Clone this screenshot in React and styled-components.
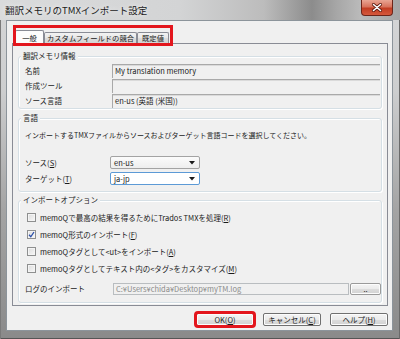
import styled, { createGlobalStyle } from 'styled-components';

const GlobalStyle = createGlobalStyle`
  html, body {
    margin: 0;
    padding: 0;
    background: #8c8c8c;
  }
  body {
    font-family: "Noto Sans CJK JP", "Noto Sans", sans-serif;
    color: #1a1a1a;
  }
`;

function App() {
  return (
    <>
      <GlobalStyle />
      <Window>
        <TitleBar>
          <Title>翻訳メモリのTMXインポート設定</Title>
          <CloseButton>
            <svg width='12' height='9' viewBox='0 0 12 9'>
              <path d='M2.5 1.5 L9.5 7.5 M9.5 1.5 L2.5 7.5' stroke='#5a1a10' strokeWidth='3' strokeLinecap='round' />
              <path d='M2.5 1.5 L9.5 7.5 M9.5 1.5 L2.5 7.5' stroke='#fff' strokeWidth='1.6' strokeLinecap='round' />
            </svg>
          </CloseButton>
        </TitleBar>
        <Body>
          <TabWrap>
            <Tab $active $w={29}>一般</Tab>
            <Tab $w={93}>カスタムフィールドの競合</Tab>
            <Tab $w={32}>既定値</Tab>
          </TabWrap>
          <Panel>
            <Group $pb={0}>
              <Legend>翻訳メモリ情報</Legend>
              <InfoGrid>
                <Label>名前</Label>
                <Field>My translation memory</Field>
                <Label>作成ツール</Label>
                <Field />
                <Label>ソース言語</Label>
                <Field>en-us (英語 (米国))</Field>
              </InfoGrid>
            </Group>

            <Group $gap={9} $pb={6}>
              <Legend>言語</Legend>
              <Sentence>インポートするTMXファイルからソースおよびターゲット言語コードを選択してください。</Sentence>
              <SelectGrid>
                <Label>ソース(<Key>S</Key>)</Label>
                <Select>
                  <span>en-us</span>
                  <Arrow />
                </Select>
                <Label>ターゲット(<Key>T</Key>)</Label>
                <Select $focused>
                  <span>ja-jp</span>
                  <Arrow />
                </Select>
              </SelectGrid>
            </Group>

            <Group $gap={8} $pb={7}>
              <Legend>インポートオプション</Legend>
              <OptionList>
                <CheckRow>
                  <CheckBox />
                  <span>memoQで最高の結果を得るためにTrados TMXを処理(<Key>R</Key>)</span>
                </CheckRow>
                <CheckRow>
                  <CheckBox checked />
                  <span>memoQ形式のインポート(<Key>F</Key>)</span>
                </CheckRow>
                <CheckRow>
                  <CheckBox />
                  <span>memoQタグとして&lt;ut&gt;をインポート(<Key>A</Key>)</span>
                </CheckRow>
                <CheckRow>
                  <CheckBox />
                  <span>memoQタグとしてテキスト内の&lt;タグ&gt;をカスタマイズ(<Key>M</Key>)</span>
                </CheckRow>
              </OptionList>
              <LogRow>
                <Label>ログのインポート</Label>
                <PathField>C:¥Users¥chida¥Desktop¥myTM.log</PathField>
                <Button $small>..</Button>
              </LogRow>
            </Group>
          </Panel>

          <ButtonRow>
            <Button $marked>OK(<Key>O</Key>)</Button>
            <Button>キャンセル(<Key>C</Key>)</Button>
            <Button>ヘルプ(<Key>H</Key>)</Button>
          </ButtonRow>
        </Body>
      </Window>
    </>
  );
}

function Arrow() {
  return (
    <svg width='6' height='4' viewBox='0 0 6 4'>
      <path d='M0 0 H6 L3 3.5 Z' fill='#1a1a1a' />
    </svg>
  );
}

function CheckBox({ checked }) {
  return (
    <Box>
      {checked && (
        <svg width='7' height='7' viewBox='0 0 7 7'>
          <path d='M1 3.8 L2.8 5.8 L6 1' stroke='#2b4fa8' strokeWidth='1.3' fill='none' />
        </svg>
      )}
    </Box>
  );
}

export default App;

const Window = styled.div`
  box-sizing: border-box;
  width: 400px;
  height: 339px;
  display: flex;
  flex-direction: column;
  padding: 0 7px 8px 6px;
  background: linear-gradient(180deg, #d5d6d7 0, #cdcecf 90px, #a4a4a4 210px, #8a8a8a 100%);
  box-shadow: inset 1px 0 #7a7a7a, inset -1px 0 #6a6a6a, inset 0 -1px #555;
`;

const TitleBar = styled.div`
  height: 20px;
  margin: 0 -7px 0 -6px;
  padding: 0 7px 0 5px;
  display: flex;
  align-items: flex-start;
  justify-content: space-between;
  background: linear-gradient(90deg, #dadbdc 0%, #d3d4d5 45%, #bcbcbc 66%, #8c8c8c 78%, #a6a6a6 84%, #bababa 90%, #a5a5a5 100%);
`;

const Title = styled.div`
  font-size: 9.5px;
  line-height: 21px;
  color: #1b1b1b;
  text-shadow: 0 0 5px rgba(255, 255, 255, 0.9);
`;

const CloseButton = styled.div`
  box-sizing: border-box;
  width: 32px;
  height: 16px;
  display: flex;
  align-items: center;
  justify-content: center;
  border: 1px solid #6d2519;
  border-top: none;
  border-radius: 0 0 4px 4px;
  background: linear-gradient(180deg, #e9a593 0%, #d8735c 45%, #c23d22 55%, #d5583c 100%);
`;

const Body = styled.div`
  flex: 1;
  display: flex;
  flex-direction: column;
  background: #f0f0f0;
  border: 1px solid #8c949b;
  padding: 7px 4px 4px 5px;
`;

const TabWrap = styled.div`
  position: relative;
  z-index: 2;
  align-self: flex-start;
  display: flex;
  align-items: flex-end;
  width: 154px;
  height: 15px;
  margin-left: 4px;
  outline: 3px solid #e3161d;
`;

const Tab = styled.div`
  box-sizing: border-box;
  width: ${(p) => p.$w}px;
  height: ${(p) => (p.$active ? 14 : 11)}px;
  margin-left: ${(p) => (p.$active ? -1 : 0)}px;
  margin-bottom: ${(p) => (p.$active ? -1 : 0)}px;
  display: flex;
  align-items: center;
  justify-content: center;
  white-space: nowrap;
  border: 1px solid #898c95;
  border-bottom: none;
  border-radius: 2px 2px 0 0;
  background: ${(p) => (p.$active ? '#fcfcfc' : 'linear-gradient(180deg, #f3f3f3, #e7e7e7 50%, #dcdcdc 50%, #d4d4d4)')};
  font-size: 7.3px;
  line-height: 10px;
`;

const Panel = styled.div`
  flex: 1;
  display: flex;
  flex-direction: column;
  border: 1px solid #898c95;
  padding: 12px 5px 2px 5px;
  background: #f0f0f0;
`;

const Group = styled.div`
  margin-top: ${(p) => p.$gap || 0}px;
  border: 1px solid #d5dfe5;
  border-radius: 3px;
  box-shadow: inset 1px 1px #fff, 1px 1px #fff;
  padding: 0 1px ${(p) => p.$pb}px 6px;
`;

const Legend = styled.div`
  display: table;
  margin: -6px 0 0 -4px;
  padding: 0 2px;
  background: #f0f0f0;
  font-size: 7.5px;
  line-height: 10px;
`;

const Label = styled.div`
  font-size: 7.5px;
  line-height: 10px;
  white-space: nowrap;
`;

const Key = styled.span`
  text-decoration: underline;
`;

const InfoGrid = styled.div`
  margin-top: 3px;
  display: grid;
  grid-template-columns: 87px 1fr;
  grid-auto-rows: 14px;
  row-gap: 1px;
  align-items: center;
`;

const Field = styled.div`
  box-sizing: border-box;
  height: 14px;
  border-top: 1px solid #a9a9a9;
  border-left: 1px solid #a9a9a9;
  box-shadow: inset 0 1px #dadada;
  padding-left: 2px;
  font-size: 7.5px;
  line-height: 12px;
  white-space: nowrap;
`;

const Sentence = styled.div`
  margin-top: 7px;
  font-size: 7px;
  line-height: 10px;
  white-space: nowrap;
`;

const SelectGrid = styled.div`
  margin-top: 16px;
  display: grid;
  grid-template-columns: 85px 90px;
  grid-auto-rows: 13px;
  row-gap: 3px;
  align-items: center;
`;

const Select = styled.div`
  box-sizing: border-box;
  height: 13px;
  display: flex;
  align-items: center;
  justify-content: space-between;
  padding: 0 4px 0 3px;
  border: 1px solid ${(p) => (p.$focused ? '#5c9ad6' : '#a3a3a3')};
  border-radius: 2px;
  background: ${(p) => (p.$focused ? '#fff' : 'linear-gradient(180deg, #fbfbfb, #eeeeee)')};
  font-size: 7.5px;
  line-height: 11px;
`;

const OptionList = styled.div`
  margin-top: 4px;
  display: flex;
  flex-direction: column;
`;

const CheckRow = styled.div`
  height: 17px;
  display: flex;
  align-items: center;
  gap: 4px;
  padding-left: 2px;
  font-size: 7.5px;
  line-height: 10px;
  white-space: nowrap;
`;

const Box = styled.div`
  box-sizing: border-box;
  width: 9px;
  height: 9px;
  display: flex;
  align-items: center;
  justify-content: center;
  border: 1px solid #8e8f8f;
  background: linear-gradient(135deg, #dcdcdc, #f7f7f7);
  box-shadow: inset 0 0 0 1px #f4f4f4;
`;

const LogRow = styled.div`
  margin-top: 5px;
  display: grid;
  grid-template-columns: 87px 236px 31px;
  column-gap: 1px;
  height: 13px;
  align-items: center;
`;

const PathField = styled.div`
  box-sizing: border-box;
  height: 12px;
  border: 1px solid #b9bdc0;
  padding-left: 2px;
  font-size: 7.5px;
  line-height: 10px;
  color: #8a8a8a;
  white-space: nowrap;
`;

const ButtonRow = styled.div`
  margin-top: 7px;
  display: flex;
  justify-content: flex-end;
  gap: 9px;
`;

const Button = styled.div`
  box-sizing: border-box;
  width: ${(p) => (p.$small ? 31 : 58)}px;
  height: ${(p) => (p.$small ? 12 : 13)}px;
  display: flex;
  align-items: center;
  justify-content: center;
  border: 1px solid ${(p) => (p.$small ? '#9a9a9a' : '#707070')};
  border-radius: 2px;
  background: linear-gradient(180deg, #f4f4f4, #ebebeb 50%, #dddddd 50%, #d2d2d2);
  box-shadow: inset 0 0 0 1px #fcfcfc;
  font-size: 7.5px;
  line-height: 10px;
  color: #1a1a1a;
  white-space: nowrap;
  outline: ${(p) => (p.$marked ? '3px solid #e3161d' : 'none')};
  outline-offset: -1px;
`;
